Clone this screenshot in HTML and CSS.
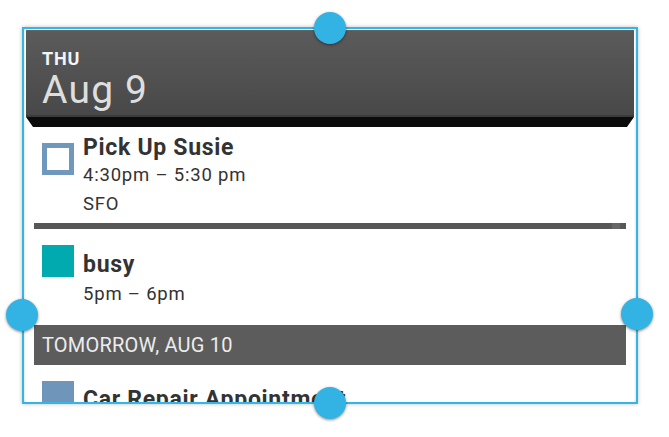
FILE: index.html
```html
<!DOCTYPE html>
<html>
<head>
<meta charset="utf-8">
<link rel="stylesheet" href="styles.css">
</head>
<body>
<div class="stage">
  <div class="frame">
    <div class="widget">
      <div class="header">
        <div class="dow">THU</div>
        <div class="date">Aug 9</div>
      </div>
      <div class="ledge"></div>
      <div class="event ev1">
        <div class="icon outline"></div>
        <div class="details">
          <div class="title">Pick Up Susie</div>
          <div class="time">4:30pm – 5:30 pm</div>
          <div class="where">SFO</div>
        </div>
      </div>
      <div class="divider"></div>
      <div class="event ev2">
        <div class="icon teal"></div>
        <div class="details">
          <div class="title">busy</div>
          <div class="time t2">5pm – 6pm</div>
        </div>
      </div>
      <div class="section">TOMORROW, AUG 10</div>
      <div class="event ev3">
        <div class="icon blue"></div>
        <div class="details">
          <div class="title">Car Repair Appointment</div>
        </div>
      </div>
    </div>
  </div>
  <div class="handle h-top"></div>
  <div class="handle h-left"></div>
  <div class="handle h-right"></div>
  <div class="handle h-bottom"></div>
</div>
</body>
</html>
```
FILE: styles.css
```css
html, body {
  margin: 0;
  padding: 0;
  background: #ffffff;
}
body {
  font-family: Roboto, "Liberation Sans", sans-serif;
}
.stage {
  position: relative;
  width: 669px;
  height: 437px;
  overflow: hidden;
  padding-top: 27px;
  box-sizing: border-box;
}
.frame {
  margin-left: 22px;
  width: 616px;
  height: 377px;
  box-sizing: border-box;
  border: 2px solid #33b5e5;
  padding: 1px 2px 0 2px;
  box-shadow: 0 0 4px rgba(0,0,0,0.25), inset 0 0 3px rgba(0,0,0,0.2);
}
.widget {
  height: 100%;
  background: #fff;
  overflow: hidden;
}
.header {
  height: 87px;
  box-sizing: border-box;
  padding: 0 16px;
  background: linear-gradient(#5b5b5b, #484848);
  border-top: 1px solid #646464;
  border-bottom: 2px solid #3a3a3a;
  color: #dcdcdc;
}
.dow {
  font-weight: bold;
  font-size: 18px;
  line-height: 20px;
  letter-spacing: 0.8px;
  padding-top: 18px;
  color: #f4f4f4;
}
.date {
  font-size: 39px;
  line-height: 40px;
  letter-spacing: 1.2px;
  margin-top: 1px;
  color: #dedede;
}
.ledge {
  height: 10px;
  background: #0b0b0b;
  clip-path: polygon(0 0, 100% 0, calc(100% - 7px) 100%, 7px 100%);
}
.event {
  display: flex;
  padding: 0 16px;
  gap: 9px;
  color: #333;
}
.icon {
  width: 32px;
  height: 32px;
  box-sizing: border-box;
  flex: none;
}
.outline {
  border: 5px solid #7097bc;
  background: #fff;
}
.teal { background: #00aaaf; }
.blue { background: #6f95ba; }
.title {
  font-weight: bold;
  font-size: 23px;
  line-height: 26px;
  letter-spacing: 0.7px;
  white-space: nowrap;
}
.time, .where {
  font-size: 18.5px;
  line-height: 22px;
  letter-spacing: 0.8px;
}
.ev1 { padding-top: 8px; padding-bottom: 8px; }
.ev1 .icon { margin-top: 8px; }
.ev1 .time { margin-top: 3px; }
.ev1 .where { margin-top: 7px; }
.divider {
  position: relative;
  height: 6px;
  margin: 0 8px;
  background: #575757;
}
.divider::after {
  content: "";
  position: absolute;
  right: 6px;
  top: 0;
  width: 8px;
  height: 6px;
  background: #666;
}
.ev2 { padding-top: 16px; padding-bottom: 20px; }
.ev2 .details { margin-top: 7px; }
.ev2 .t2 { margin-top: 5px; }
.section {
  height: 40px;
  margin: 0 8px;
  padding-left: 8px;
  background: #5c5c5c;
  color: #ececec;
  font-size: 20px;
  line-height: 40px;
  letter-spacing: 0.2px;
}
.ev3 { padding-top: 16px; }
.ev3 .details { margin-top: 6px; }
.handle {
  position: absolute;
  width: 32px;
  height: 32px;
  border-radius: 50%;
  background: #33b3e4;
  box-shadow: 0 1px 3px rgba(0,0,0,0.45);
}
.h-top { left: 314px; top: 12px; }
.h-left { left: 6px; top: 299px; }
.h-right { left: 621px; top: 298px; }
.h-bottom { left: 314px; top: 387px; }
```
